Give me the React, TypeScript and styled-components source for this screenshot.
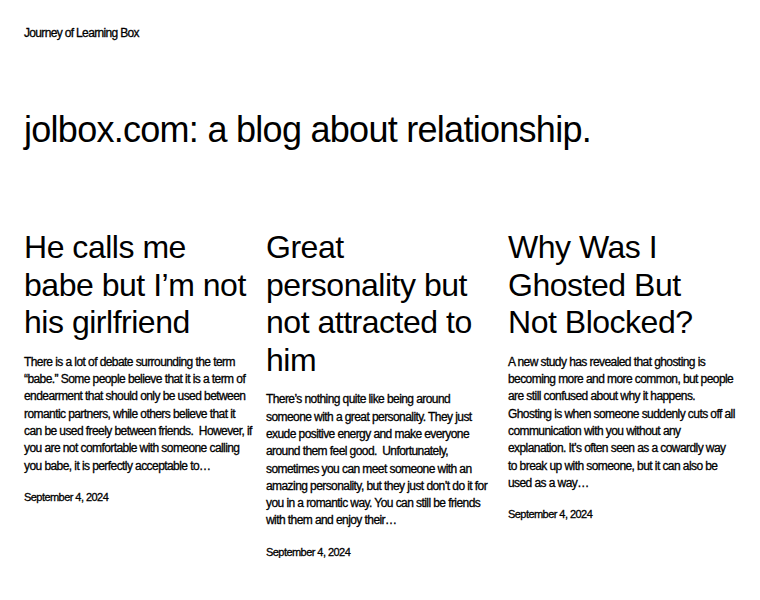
import React from 'react'
import styled, { createGlobalStyle } from 'styled-components'

const Global = createGlobalStyle`
    html, body {
        margin: 0;
        padding: 0;
        background: #ffffff;
    }
    body {
        font-family: "Liberation Sans", Arial, sans-serif;
        color: #000000;
        -webkit-font-smoothing: antialiased;
    }
`

const Page = styled.div`
    padding: 0 24px;
    width: 760px;
    box-sizing: border-box;
`

const Header = styled.header`
    height: 66px;
    display: flex;
    align-items: center;
`

const SiteTitle = styled.a`
    font-size: 12px;
    letter-spacing: -0.055em;
    -webkit-text-stroke: 0.3px #000;
    color: #000;
    text-decoration: none;
`

const PageTitle = styled.h1`
    margin: 43px 0 0;
    font-size: 36px;
    font-weight: 400;
    line-height: 1.15;
    letter-spacing: -0.02em;
`

const Grid = styled.main`
    margin-top: 79px;
    display: grid;
    grid-template-columns: repeat(3, 229px);
    column-gap: 13px;
    align-items: start;
`

const Post = styled.article`
    display: flex;
    flex-direction: column;
`

const PostTitle = styled.h2`
    margin: 0;
    font-size: 32px;
    font-weight: 400;
    line-height: 37.5px;
    letter-spacing: -0.015em;
`

const Excerpt = styled.p`
    margin: 12px 0 0;
    font-size: 12px;
    line-height: 17.3px;
    letter-spacing: -0.048em;
    -webkit-text-stroke: 0.3px #000;
    white-space: pre-wrap;
`

const PostDate = styled.time`
    margin-top: 16px;
    font-size: 11px;
    letter-spacing: -0.05em;
    -webkit-text-stroke: 0.3px #000;
`

const posts = [
    {
        title: 'He calls me babe but I\u2019m not his girlfriend',
        excerpt:
            'There is a lot of debate surrounding the term \u201cbabe.\u201d Some people believe that it is a term of endearment that should only be used between romantic partners, while others believe that it can be used freely between friends.  However, if you are not comfortable with someone calling you babe, it is perfectly acceptable to\u2026',
    },
    {
        title: 'Great personality but not attracted to him',
        excerpt:
            'There\u2019s nothing quite like being around someone with a great personality. They just exude positive energy and make everyone around them feel good.  Unfortunately, sometimes you can meet someone with an amazing personality, but they just don\u2019t do it for you in a romantic way. You can still be friends with them and enjoy their\u2026',
    },
    {
        title: 'Why Was I Ghosted But Not Blocked?',
        excerpt:
            'A new study has revealed that ghosting is becoming more and more common, but people are still confused about why it happens. Ghosting is when someone suddenly cuts off all communication with you without any explanation. It\u2019s often seen as a cowardly way to break up with someone, but it can also be used as a way\u2026',
    },
]

export default function App() {
    return (
        <Page>
            <Global />
            <Header>
                <SiteTitle href="#">Journey of Learning Box</SiteTitle>
            </Header>
            <PageTitle>jolbox.com: a blog about relationship.</PageTitle>
            <Grid>
                {posts.map((p) => (
                    <Post key={p.title}>
                        <PostTitle>{p.title}</PostTitle>
                        <Excerpt>{p.excerpt}</Excerpt>
                        <PostDate>September 4, 2024</PostDate>
                    </Post>
                ))}
            </Grid>
        </Page>
    )
}
